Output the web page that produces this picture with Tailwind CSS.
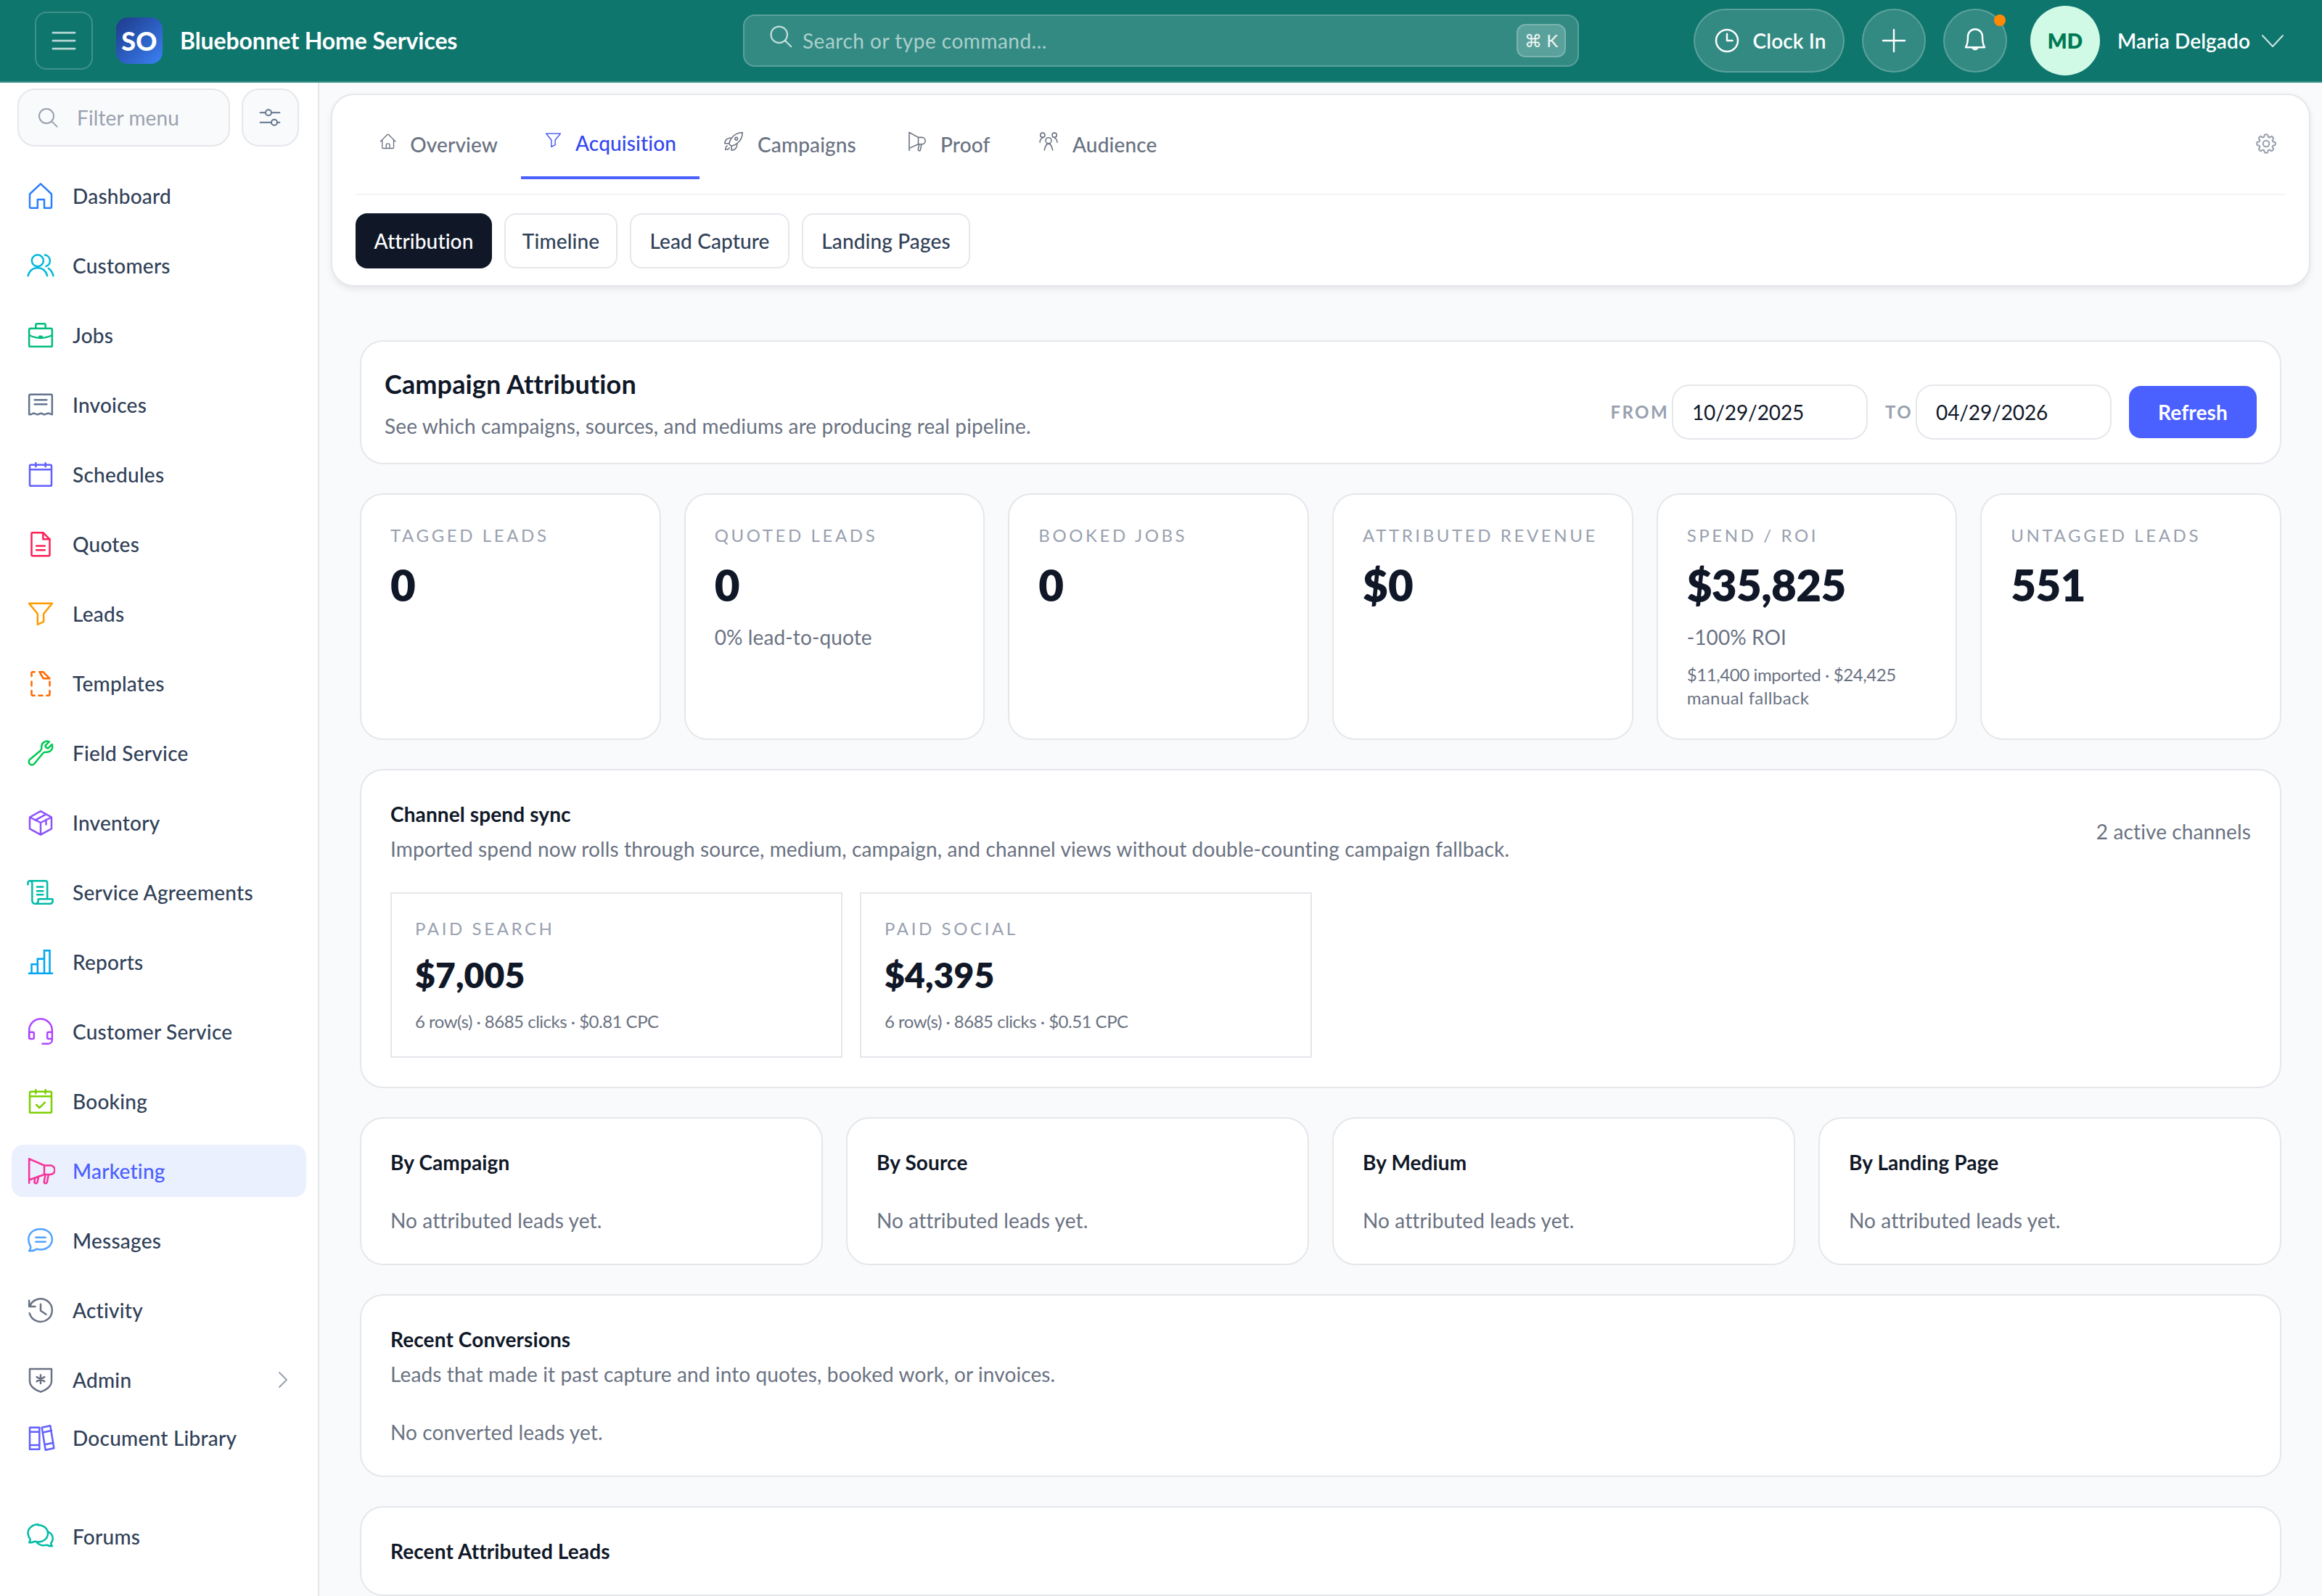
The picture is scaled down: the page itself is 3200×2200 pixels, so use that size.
<!DOCTYPE html>
<html lang="en">
<head>
  <meta charset="UTF-8">
  <title>Campaign Attribution</title>
  <script src="https://cdn.jsdelivr.net/npm/@tailwindcss/browser@4"></script>
</head>
<body class="bg-gray-50 font-['Lato',sans-serif] text-gray-900 tracking-[0.06px]">
<div class="[zoom:2] w-[1600px] h-[1100px] overflow-hidden flex flex-col">

  <!-- Top bar -->
  <header class="h-[57px] shrink-0 bg-[#0f766e] border-b border-white/20 flex items-center pl-6 pr-[26px]">
    <button class="w-10 h-10 rounded-lg border border-white/20 flex items-center justify-center text-white/70">
      <svg class="w-[22px] h-[22px]" viewBox="0 0 24 24" fill="none" stroke="currentColor" stroke-width="1.5" stroke-linecap="round"><path d="M3.75 6h16.5M3.75 12h16.5M3.75 18h16.5"/></svg>
    </button>
    <div class="ml-4 w-8 h-8 rounded-lg bg-gradient-to-br from-[#1e3a8a] to-[#3b82f6] flex items-center justify-center text-white font-black text-lg leading-none">SO</div>
    <div class="ml-3 text-white font-bold text-base w-[191px] whitespace-nowrap tracking-[-0.06px]">Bluebonnet Home Services</div>

    <div class="ml-[197px] w-[576px] h-9 rounded-lg bg-white/15 border border-white/20 flex items-center pl-[17px] pr-2 relative">
      <svg class="w-[18px] h-[18px] text-white/70 -mt-1.5 -ml-[1px]" viewBox="0 0 24 24" fill="none" stroke="currentColor" stroke-width="1.5" stroke-linecap="round"><circle cx="10.5" cy="10.5" r="7.5"/><path d="M16 16l5.5 5.5"/></svg>
      <span class="ml-1.5 text-sm text-white/60 tracking-[0.25px]">Search or type command...</span>
      <span class="ml-auto w-[34px] h-[23px] rounded-md bg-white/20 border border-white/20 flex items-center justify-center text-xs text-white/90">⌘ K</span>
    </div>

    <div class="ml-auto flex items-center">
      <button class="h-11 w-[104px] rounded-full bg-white/15 border border-white/20 flex items-center justify-center gap-2 text-white text-sm font-semibold">
        <svg class="w-5 h-5" viewBox="0 0 24 24" fill="none" stroke="currentColor" stroke-width="1.5" stroke-linecap="round" stroke-linejoin="round"><circle cx="12" cy="12" r="9"/><path d="M12 6.5V12h4.5"/></svg>
        Clock In
      </button>
      <button class="ml-3 w-11 h-11 rounded-full bg-white/15 border border-white/20 flex items-center justify-center text-white">
        <svg class="w-6 h-6" viewBox="0 0 24 24" fill="none" stroke="currentColor" stroke-width="1.2" stroke-linecap="round"><path d="M12 4.5v15M4.5 12h15"/></svg>
      </button>
      <button class="ml-3 w-11 h-11 rounded-full bg-white/15 border border-white/20 flex items-center justify-center text-white relative">
        <svg class="w-5 h-5" viewBox="0 0 24 24" fill="none" stroke="currentColor" stroke-width="1.5" stroke-linecap="round" stroke-linejoin="round"><path d="M12 2.5a6 6 0 0 0-6 6c0 4-.6 7-1.8 9h15.6c-1.2-2-1.8-5-1.8-9a6 6 0 0 0-6-6z"/><path d="M9.8 17.5a2.3 2.3 0 0 0 4.4 0"/></svg>
        <span class="absolute right-0 top-[3px] w-2 h-2 rounded-full bg-orange-400"></span>
      </button>
      <div class="ml-4 w-12 h-12 rounded-full bg-emerald-100 text-emerald-700 flex items-center justify-center text-sm font-extrabold">MD</div>
      <span class="ml-3 w-[92px] text-white text-sm font-semibold whitespace-nowrap">Maria Delgado</span>
      <svg class="ml-[7px] w-4 h-4 text-white/80" viewBox="0 0 16 16" fill="none" stroke="currentColor" stroke-width="1" stroke-linecap="round" stroke-linejoin="round"><path d="M1 4.5l7 7.5 7-7.5"/></svg>
    </div>
  </header>

  <div class="flex flex-1 min-h-0">
    <!-- Sidebar -->
    <aside class="w-[220px] shrink-0 bg-white border-r border-gray-200 pt-1 overflow-hidden">
      <div class="flex gap-2 pl-3 pr-[13px]">
        <div class="w-[148px] h-10 rounded-xl bg-gray-50 border border-gray-200 flex items-center pl-3 text-gray-400">
          <svg class="w-4 h-4" viewBox="0 0 24 24" fill="none" stroke="currentColor" stroke-width="1.5" stroke-linecap="round"><circle cx="10.5" cy="10.5" r="7.5"/><path d="M16 16l5.5 5.5"/></svg>
          <span class="ml-3 text-sm">Filter menu</span>
        </div>
        <button class="w-10 h-10 rounded-xl bg-gray-50 border border-gray-200 flex items-center justify-center text-slate-500">
          <svg class="w-4 h-4" viewBox="0 0 24 24" fill="none" stroke="currentColor" stroke-width="1.5" stroke-linecap="round"><path d="M2 7h5M14 7h8M2 17h11M20 17h2"/><circle cx="10.5" cy="7" r="3"/><circle cx="16.5" cy="17" r="3"/></svg>
        </button>
      </div>

      <nav class="mt-4 px-2 flex flex-col gap-3 text-sm font-medium text-slate-700 tracking-[0.12px]">
        <a class="h-9 flex items-center gap-3 px-2.5">
          <svg class="w-5 h-5 text-blue-500" viewBox="0 0 24 24" fill="none" stroke="currentColor" stroke-width="1.5" stroke-linejoin="round"><path d="M3 10.5 12 2l9 8.5V21a1 1 0 0 1-1 1h-5v-7H9.5v7H4a1 1 0 0 1-1-1z"/></svg>
          Dashboard
        </a>
        <a class="h-9 flex items-center gap-3 px-2.5">
          <svg class="w-5 h-5 text-cyan-500" viewBox="0 0 24 24" fill="none" stroke="currentColor" stroke-width="1.5" stroke-linecap="round"><circle cx="9.5" cy="8" r="4.8"/><path d="M1.5 20.5c1.2-4 4-6.5 8-6.5s6.8 2.5 8 6.5"/><path d="M15.5 3.3a4.8 4.8 0 0 1 1 9.3M18.5 14.5c1.8.9 3.1 3 4 6"/></svg>
          Customers
        </a>
        <a class="h-9 flex items-center gap-3 px-2.5">
          <svg class="w-5 h-5 text-emerald-500" viewBox="0 0 24 24" fill="none" stroke="currentColor" stroke-width="1.5" stroke-linecap="round" stroke-linejoin="round"><rect x="2.5" y="6.5" width="19" height="15" rx="1"/><path d="M8 6.5v-3a1 1 0 0 1 1-1h6a1 1 0 0 1 1 1v3M2.5 12c6 3 13 3 19 0M11 13h2"/></svg>
          Jobs
        </a>
        <a class="h-9 flex items-center gap-3 px-2.5">
          <svg class="w-5 h-5 text-slate-500" viewBox="0 0 24 24" fill="none" stroke="currentColor" stroke-width="1.5" stroke-linecap="round" stroke-linejoin="round"><path d="M2.5 20V4.5a1 1 0 0 1 1-1h17a1 1 0 0 1 1 1V20c-1.5 0-1.7-1-3.2-1s-1.6 1-3.1 1-1.6-1-2.7-1-1.6 1-3.1 1-1.6-1-3.1-1-1.3 1-2.8 1z"/><path d="M7 8h10M7 11.5h10"/></svg>
          Invoices
        </a>
        <a class="h-9 flex items-center gap-3 px-2.5">
          <svg class="w-5 h-5 text-indigo-500" viewBox="0 0 24 24" fill="none" stroke="currentColor" stroke-width="1.5" stroke-linecap="round" stroke-linejoin="round"><rect x="3" y="4" width="18" height="17.5" rx="1"/><path d="M3 8h18M8 2.5v3M16 2.5v3"/></svg>
          Schedules
        </a>
        <a class="h-9 flex items-center gap-3 px-2.5">
          <svg class="w-5 h-5 text-rose-500" viewBox="0 0 24 24" fill="none" stroke="currentColor" stroke-width="1.5" stroke-linecap="round" stroke-linejoin="round"><path d="M5 2.5h9L19.5 8v13a.8.8 0 0 1-.8.8H5.3a.8.8 0 0 1-.8-.8V3a.5.5 0 0 1 .5-.5z"/><path d="M14 2.5V8h5.5M8.5 13.500h7M8.5 17h7"/></svg>
          Quotes
        </a>
        <a class="h-9 flex items-center gap-3 px-2.5">
          <svg class="w-5 h-5 text-amber-500" viewBox="0 0 24 24" fill="none" stroke="currentColor" stroke-width="1.5" stroke-linecap="round" stroke-linejoin="round"><path d="M2.5 3.5h19L14.5 12v6.5l-5 2.5v-9z"/></svg>
          Leads
        </a>
        <a class="h-9 flex items-center gap-3 px-2.5">
          <svg class="w-5 h-5 text-orange-500" viewBox="0 0 24 24" fill="none" stroke="currentColor" stroke-width="1.5" stroke-linecap="round" stroke-linejoin="round"><path d="M4.5 6V3.5a1 1 0 0 1 1-1H7M4.5 10.5V14M4.5 18v3a1 1 0 0 0 1 1H7M10.5 22h3M17 22h1.5a1 1 0 0 0 1-1v-3M19.5 14v-3.5M11 2.5h3L19.5 8h-5a.5.5 0 0 1-.5-.5z"/></svg>
          Templates
        </a>
        <a class="h-9 flex items-center gap-3 px-2.5">
          <svg class="w-5 h-5 text-green-500" viewBox="0 0 24 24" fill="none" stroke="currentColor" stroke-width="1.5" stroke-linecap="round" stroke-linejoin="round"><path d="M21.75 6.75a4.5 4.5 0 01-4.884 4.484c-1.076-.091-2.264.071-2.95.904l-7.152 8.684a2.548 2.548 0 11-3.586-3.586l8.684-7.152c.833-.686.995-1.874.904-2.95a4.5 4.5 0 016.336-4.486l-3.276 3.276a3.004 3.004 0 002.25 2.25l3.276-3.276c.256.565.398 1.192.398 1.852z"/></svg>
          Field Service
        </a>
        <a class="h-9 flex items-center gap-3 px-2.5">
          <svg class="w-5 h-5 text-violet-500" viewBox="0 0 24 24" fill="none" stroke="currentColor" stroke-width="1.5" stroke-linecap="round" stroke-linejoin="round"><path d="M12 2.5l9 5V17l-9 5-9-5V7.5zM12 12l9-4.5M12 12v10M12 12L3 7.5M16.5 5l-9 5M16.5 9.5v4"/></svg>
          Inventory
        </a>
        <a class="h-9 flex items-center gap-3 px-2.5">
          <svg class="w-5 h-5 text-teal-500" viewBox="0 0 24 24" fill="none" stroke="currentColor" stroke-width="1.5" stroke-linecap="round" stroke-linejoin="round"><path d="M1.5 5.5V4A1.5 1.5 0 0 1 3 2.5h13A1.5 1.5 0 0 1 17.5 4v13M3 2.5a2 2 0 0 1 2 2V19a2.5 2.5 0 0 0 2.5 2.5H20a2.5 2.5 0 0 0 2-2.5v-1a.5.5 0 0 0-.5-.5h-11a.5.5 0 0 0-.5.5v1a2.5 2.5 0 0 1-2.5 2.5M9 7.5h5M9 11h5M9 14h5"/></svg>
          Service Agreements
        </a>
        <a class="h-9 flex items-center gap-3 px-2.5">
          <svg class="w-5 h-5 text-sky-500" viewBox="0 0 24 24" fill="none" stroke="currentColor" stroke-width="1.5" stroke-linecap="square"><path d="M2.5 21.5h19M4.5 21v-7h5v7M9.5 21V9.5H15V21M15 21V2.5h4.5V21"/></svg>
          Reports
        </a>
        <a class="h-9 flex items-center gap-3 px-2.5">
          <svg class="w-5 h-5 text-purple-500" viewBox="0 0 24 24" fill="none" stroke="currentColor" stroke-width="1.5" stroke-linecap="round" stroke-linejoin="round"><path d="M2.5 17v-6a9.5 9.5 0 0 1 19 0v8a3 3 0 0 1-3 3h-5"/><path d="M2.5 12.5h3a1 1 0 0 1 1 1V17a1 1 0 0 1-1 1h-2a1 1 0 0 1-1-1zM21.5 12.5h-3a1 1 0 0 0-1 1V17a1 1 0 0 0 1 1h3"/></svg>
          Customer Service
        </a>
        <a class="h-9 flex items-center gap-3 px-2.5">
          <svg class="w-5 h-5 text-lime-500" viewBox="0 0 24 24" fill="none" stroke="currentColor" stroke-width="1.5" stroke-linecap="round" stroke-linejoin="round"><rect x="3" y="4" width="18" height="17.5" rx="1"/><path d="M3 8h18M8 2.5v3M16 2.5v3M8.5 15l2.5 2.5 4.5-4.5"/></svg>
          Booking
        </a>
        <a class="h-9 flex items-center gap-3 px-2.5 rounded-lg bg-[#ebf0fe] text-[#4a60ff]">
          <svg class="w-5 h-5 text-pink-500" viewBox="0 0 24 24" fill="none" stroke="currentColor" stroke-width="1.5" stroke-linecap="round" stroke-linejoin="round"><path d="M2.5 2v20M2.5 2L15 7.5h5a3 3 0 0 1 0 7.5h-5L2.5 19.5M15 7.5V15M7.5 17.5l-.7 3.5a1.3 1.3 0 0 0 2.5.5l1-5M16 15l-1.200 6a1.3 1.3 0 0 0 2.5.5L18.500 15"/></svg>
          Marketing
        </a>
        <a class="h-9 flex items-center gap-3 px-2.5">
          <svg class="w-5 h-5 text-blue-400" viewBox="0 0 24 24" fill="none" stroke="currentColor" stroke-width="1.5" stroke-linecap="round" stroke-linejoin="round"><path d="M12 2.5c5.3 0 9.5 3.5 9.5 8.5s-4.2 8.5-9.5 8.5c-1.2 0-2.4-.2-3.5-.5-1.2 1-3.500 1.700-6 1.500.8-.8 1.300-1.900 1.300-3.200-1-1.600-1.800-3.800-1.800-6.300 0-5 4.200-8.500 9.500-8.500zM8 9.500h8M8 13h8"/></svg>
          Messages
        </a>
        <a class="h-9 flex items-center gap-3 px-2.5">
          <svg class="w-5 h-5 text-gray-500" viewBox="0 0 24 24" fill="none" stroke="currentColor" stroke-width="1.5" stroke-linecap="round" stroke-linejoin="round"><path d="M2.5 4v5h5M3 9a9.5 9.5 0 1 1-.2 5.5M12 7v5.5l4.5 3"/></svg>
          Activity
        </a>
        <a class="h-9 flex items-center gap-3 px-2.5">
          <svg class="w-5 h-5 text-gray-500" viewBox="0 0 24 24" fill="none" stroke="currentColor" stroke-width="1.5" stroke-linecap="round" stroke-linejoin="round"><path d="M3 3h18v10c0 4-4 7.5-9 9-5-1.5-9-5-9-9z"/><path d="M12 8v7M8.8 9.7l6.4 3.6M15.2 9.7l-6.4 3.6"/></svg>
          Admin
          <svg class="ml-auto w-3 h-3 text-gray-400" viewBox="0 0 12 12" fill="none" stroke="currentColor" stroke-width="1" stroke-linecap="round" stroke-linejoin="round"><path d="M3.5 1l5 5-5 5"/></svg>
        </a>
        <a class="h-9 -mt-2 flex items-center gap-3 px-2.5">
          <svg class="w-5 h-5 text-indigo-500" viewBox="0 0 24 24" fill="none" stroke="currentColor" stroke-width="1.5" stroke-linecap="round" stroke-linejoin="round"><path d="M3 3.5h8v18H3zM3 7h8M3 18h8M13 3.5L20 2l3 18.5-7 1.5zM14 7.5L21 6M15.5 17.5l7-1.5"/></svg>
          Document Library
        </a>
        <a class="h-9 mt-5 flex items-center gap-3 px-2.5">
          <svg class="w-5 h-5 text-teal-500" viewBox="0 0 24 24" fill="none" stroke="currentColor" stroke-width="1.5" stroke-linecap="round" stroke-linejoin="round"><path d="M10 2.5c4.5 0 8 3 8 7s-3.5 7-8 7c-1 0-2-.2-3-.5-1 .8-2.800 1-4.500 1 .5-.7.900-1.500 1-2.500-1-1.500-2-3.500-2-5.500 0-4 4-7 8.500-7z"/><path d="M18 8c2.500 1 4 3 4 5.500 0 1.500-.5 3-1.500 4 .1 1 .5 1.800 1 2.500-1.700 0-3.300-.3-4.500-1-3 1-6.500.2-8.500-2.500"/></svg>
          Forums
        </a>
      </nav>
    </aside>

    <!-- Main -->
    <main class="flex-1 min-w-0 pl-2 pr-2 pt-[7.5px] overflow-hidden">
      <!-- Tabs card -->
      <div class="h-[133px] rounded-2xl bg-white border border-gray-200 shadow-[0_2px_4px_rgba(0,0,0,0.08)] px-4">
        <div class="h-[69px] pt-[10px] border-b border-gray-100 flex items-start justify-between">
          <div class="flex text-sm font-medium text-gray-500">
            <a class="h-[48px] w-[114px] px-4 flex items-center gap-[9px]">
              <svg class="w-[15px] h-[15px] -mt-1" viewBox="0 0 24 24" fill="none" stroke="currentColor" stroke-width="1.25" stroke-linecap="round" stroke-linejoin="round"><path d="M2.25 12l8.954-8.955c.44-.439 1.152-.439 1.591 0L21.75 12M4.5 9.75v10.125c0 .621.504 1.125 1.125 1.125H9.75v-4.875c0-.621.504-1.125 1.125-1.125h2.25c.621 0 1.125.504 1.125 1.125V21h4.125c.621 0 1.125-.504 1.125-1.125V9.75M8.25 21h8.25"/></svg>
              Overview
            </a>
            <a class="h-[48px] w-[123px] px-4 flex items-center gap-[9px] border-b-2 border-[#4a60ff] text-[#3348f0]">
              <svg class="w-[15px] h-[15px] -mt-1" viewBox="0 0 24 24" fill="none" stroke="currentColor" stroke-width="1.25" stroke-linecap="round" stroke-linejoin="round"><path d="M2.5 3.5h19L14.5 12v6.5l-5 2.5v-9z"/></svg>
              Acquisition
            </a>
            <a class="h-[48px] w-[126px] px-4 flex items-center gap-[9px]">
              <svg class="w-[15px] h-[15px] -mt-1" viewBox="0 0 24 24" fill="none" stroke="currentColor" stroke-width="1.25" stroke-linecap="round" stroke-linejoin="round"><path d="M15.59 14.37a6 6 0 01-5.84 7.38v-4.8m5.84-2.58a14.98 14.98 0 006.16-12.12A14.98 14.98 0 009.631 8.41m5.96 5.96a14.926 14.926 0 01-5.841 2.58m-.119-8.54a6 6 0 00-7.381 5.84h4.8m2.581-5.84a14.927 14.927 0 00-2.58 5.84m2.699 2.7c-.103.021-.207.041-.311.06a15.09 15.09 0 01-2.448-2.448 14.9 14.9 0 01.06-.312m-2.24 2.39a4.493 4.493 0 00-1.757 4.306 4.493 4.493 0 004.306-1.758M16.5 9a1.5 1.5 0 11-3 0 1.5 1.5 0 013 0z"/></svg>
              Campaigns
            </a>
            <a class="h-[48px] w-[91px] px-4 flex items-center gap-[9px]">
              <svg class="w-[15px] h-[15px] -mt-1" viewBox="0 0 24 24" fill="none" stroke="currentColor" stroke-width="1.25" stroke-linecap="round" stroke-linejoin="round"><path d="M4 2v20M4 2l10 5.5h4a3 3 0 0 1 0 7.5h-4L4 19.5M14 7.5V15M15 15l-1.2 6a1.3 1.3 0 0 0 2.5.5L17.5 15"/></svg>
              Proof
            </a>
            <a class="h-[48px] px-4 flex items-center gap-[9px]">
              <svg class="w-[15px] h-[15px] -mt-1" viewBox="0 0 24 24" fill="none" stroke="currentColor" stroke-width="1.25" stroke-linecap="round" stroke-linejoin="round"><circle cx="12" cy="11" r="3.2"/><path d="M7.5 21.5c.6-3 2-7 4.5-7s3.9 4 4.5 7"/><circle cx="5.5" cy="5" r="2.5"/><circle cx="18.5" cy="5" r="2.5"/><path d="M2.5 13c0-2 1-4 2.5-4.5M21.5 13c0-2-1-4-2.5-4.5"/></svg>
              Audience
            </a>
          </div>
          <svg class="w-[17px] h-[17px] text-gray-400 mt-[15px] mr-[5px]" viewBox="0 0 24 24" fill="none" stroke="currentColor" stroke-width="1.5" stroke-linecap="round" stroke-linejoin="round"><path d="M10.343 3.94c.09-.542.56-.94 1.11-.94h1.093c.55 0 1.02.398 1.11.94l.149.894c.07.424.384.764.78.93.398.164.855.142 1.205-.108l.737-.527a1.125 1.125 0 011.45.12l.773.774c.39.389.44 1.002.12 1.45l-.527.737c-.25.35-.272.806-.107 1.204.165.397.505.71.93.78l.893.15c.543.09.94.56.94 1.109v1.094c0 .55-.397 1.02-.94 1.11l-.893.149c-.425.07-.765.383-.93.78-.165.398-.143.854.107 1.204l.527.738c.32.447.269 1.06-.12 1.45l-.774.773a1.125 1.125 0 01-1.449.12l-.738-.527c-.35-.25-.806-.272-1.203-.107-.397.165-.71.505-.781.929l-.149.894c-.09.542-.56.94-1.11.94h-1.094c-.55 0-1.019-.398-1.11-.94l-.148-.894c-.071-.424-.384-.764-.781-.93-.398-.164-.854-.142-1.204.108l-.738.527c-.447.32-1.06.269-1.45-.12l-.773-.774a1.125 1.125 0 01-.12-1.45l.527-.737c.25-.35.273-.806.108-1.204-.165-.397-.505-.71-.93-.78l-.894-.15c-.542-.09-.94-.56-.94-1.11v-1.094c0-.55.398-1.02.94-1.11l.894-.149c.424-.07.765-.383.93-.78.165-.398.143-.854-.107-1.204l-.527-.738a1.125 1.125 0 01.12-1.45l.773-.773a1.125 1.125 0 011.45-.12l.737.527c.35.25.807.272 1.204.107.397-.165.71-.505.78-.929l.15-.894z"/><path d="M15 12a3 3 0 11-6 0 3 3 0 016 0z"/></svg>
        </div>
        <div class="pt-[12.5px] flex gap-[8.5px] text-sm font-medium text-slate-700">
          <button class="h-[38px] w-[94px] rounded-lg bg-gray-900 text-white">Attribution</button>
          <button class="h-[38px] w-[78px] rounded-lg border border-gray-200">Timeline</button>
          <button class="h-[38px] w-[110px] rounded-lg border border-gray-200">Lead Capture</button>
          <button class="h-[38px] w-[116px] rounded-lg border border-gray-200">Landing Pages</button>
        </div>
      </div>

      <div class="mt-[37px] mx-5 flex flex-col gap-5">
        <!-- Title row -->
        <section class="h-[85.5px] rounded-2xl bg-white border border-gray-200 px-4 pt-[15px] pb-4 flex items-end justify-between">
          <div class="self-start">
            <h1 class="text-lg font-bold leading-7">Campaign Attribution</h1>
            <p class="mt-[5px] text-sm text-gray-500">See which campaigns, sources, and mediums are producing real pipeline.</p>
          </div>
          <div class="flex items-center">
            <span class="text-xs font-bold uppercase tracking-widest text-gray-400">From</span>
            <div class="ml-[2px] w-[135px] h-[38px] rounded-xl border border-gray-200 flex items-center pl-[13px] text-sm tracking-[-0.05px]">10/29/2025</div>
            <span class="ml-3 text-xs font-bold uppercase tracking-widest text-gray-400">To</span>
            <div class="ml-[2px] w-[135px] h-[38px] rounded-xl border border-gray-200 flex items-center pl-[13px] text-sm tracking-[-0.05px]">04/29/2026</div>
            <button class="ml-3 w-[88px] h-9 rounded-lg bg-[#4a60ff] text-white text-sm font-bold">Refresh</button>
          </div>
        </section>

        <!-- KPI cards -->
        <section class="grid grid-cols-6 gap-4">
          <div class="h-[170px] rounded-2xl bg-white border border-gray-200 p-5">
            <div class="text-xs leading-4 uppercase tracking-[0.15em] text-gray-400 whitespace-nowrap">Tagged Leads</div>
            <div class="mt-2 text-3xl leading-9 font-extrabold">0</div>
          </div>
          <div class="h-[170px] rounded-2xl bg-white border border-gray-200 p-5">
            <div class="text-xs leading-4 uppercase tracking-[0.15em] text-gray-400 whitespace-nowrap">Quoted Leads</div>
            <div class="mt-2 text-3xl leading-9 font-extrabold">0</div>
            <div class="mt-2 text-sm text-gray-500">0% lead-to-quote</div>
          </div>
          <div class="h-[170px] rounded-2xl bg-white border border-gray-200 p-5">
            <div class="text-xs leading-4 uppercase tracking-[0.15em] text-gray-400 whitespace-nowrap">Booked Jobs</div>
            <div class="mt-2 text-3xl leading-9 font-extrabold">0</div>
          </div>
          <div class="h-[170px] rounded-2xl bg-white border border-gray-200 p-5">
            <div class="text-xs leading-4 uppercase tracking-[0.15em] text-gray-400 whitespace-nowrap">Attributed Revenue</div>
            <div class="mt-2 text-3xl leading-9 font-extrabold">$0</div>
          </div>
          <div class="h-[170px] rounded-2xl bg-white border border-gray-200 p-5">
            <div class="text-xs leading-4 uppercase tracking-[0.15em] text-gray-400 whitespace-nowrap">Spend / ROI</div>
            <div class="mt-2 text-3xl leading-9 font-extrabold tracking-[-0.3px]">$35,825</div>
            <div class="mt-2 text-sm text-gray-500">-100% ROI</div>
            <div class="mt-2 text-xs leading-4 text-gray-500">
              <span class="block tracking-[-0.2px] whitespace-nowrap">$11,400 imported · $24,425</span>
              <span class="block tracking-[0.2px]">manual fallback</span>
            </div>
          </div>
          <div class="h-[170px] rounded-2xl bg-white border border-gray-200 p-5">
            <div class="text-xs leading-4 uppercase tracking-[0.15em] text-gray-400 whitespace-nowrap">Untagged Leads</div>
            <div class="mt-2 text-3xl leading-9 font-extrabold tracking-[-0.3px]">551</div>
          </div>
        </section>

        <!-- Channel spend -->
        <section class="rounded-2xl bg-white border border-gray-200 p-5">
          <div class="flex items-center justify-between">
            <div>
              <h2 class="text-sm font-bold">Channel spend sync</h2>
              <p class="mt-1 text-sm text-gray-500">Imported spend now rolls through source, medium, campaign, and channel views without double-counting campaign fallback.</p>
            </div>
            <span class="text-sm text-gray-500">2 active channels</span>
          </div>
          <div class="mt-5 grid grid-cols-4 gap-3">
            <div class="border border-gray-200 p-4">
              <div class="text-xs leading-4 uppercase tracking-[0.15em] text-gray-400">Paid Search</div>
              <div class="mt-2 text-2xl font-extrabold">$7,005</div>
              <div class="mt-2 text-xs leading-4 text-gray-500 tracking-[-0.25px]">6 row(s) · 8685 clicks · $0.81 CPC</div>
            </div>
            <div class="border border-gray-200 p-4">
              <div class="text-xs leading-4 uppercase tracking-[0.15em] text-gray-400">Paid Social</div>
              <div class="mt-2 text-2xl font-extrabold">$4,395</div>
              <div class="mt-2 text-xs leading-4 text-gray-500 tracking-[-0.25px]">6 row(s) · 8685 clicks · $0.51 CPC</div>
            </div>
          </div>
        </section>

        <!-- Breakdown -->
        <section class="grid grid-cols-4 gap-4">
          <div class="rounded-2xl bg-white border border-gray-200 p-5">
            <h3 class="text-sm font-bold">By Campaign</h3>
            <p class="mt-5 text-sm text-gray-500">No attributed leads yet.</p>
          </div>
          <div class="rounded-2xl bg-white border border-gray-200 p-5">
            <h3 class="text-sm font-bold">By Source</h3>
            <p class="mt-5 text-sm text-gray-500">No attributed leads yet.</p>
          </div>
          <div class="rounded-2xl bg-white border border-gray-200 p-5">
            <h3 class="text-sm font-bold">By Medium</h3>
            <p class="mt-5 text-sm text-gray-500">No attributed leads yet.</p>
          </div>
          <div class="rounded-2xl bg-white border border-gray-200 p-5">
            <h3 class="text-sm font-bold">By Landing Page</h3>
            <p class="mt-5 text-sm text-gray-500">No attributed leads yet.</p>
          </div>
        </section>

        <section class="rounded-2xl bg-white border border-gray-200 p-5">
          <h3 class="text-sm font-bold">Recent Conversions</h3>
          <p class="mt-1 text-sm text-gray-500">Leads that made it past capture and into quotes, booked work, or invoices.</p>
          <p class="mt-5 text-sm text-gray-500">No converted leads yet.</p>
        </section>

        <section class="rounded-2xl bg-white border border-gray-200 p-5">
          <h3 class="text-sm font-bold">Recent Attributed Leads</h3>
        </section>
      </div>
    </main>
  </div>
</div>
</body>
</html>
